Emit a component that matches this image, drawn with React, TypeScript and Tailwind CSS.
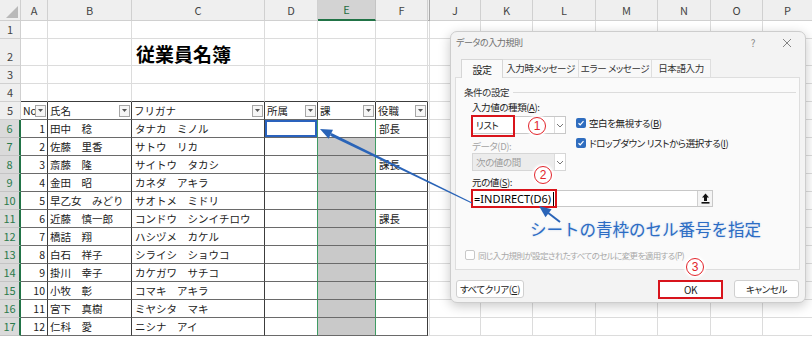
import React from "react";

const LETTERS = ["", "A", "B", "C", "D", "E", "F", "", "J", "K", "L", "M", "N", "O", "P"];
const PEOPLE: [string, string, string, string][] = [
  ["1", "田中　稔", "タナカ　ミノル", "部長"],
  ["2", "佐藤　里香", "サトウ　リカ", ""],
  ["3", "斎藤　隆", "サイトウ　タカシ", "課長"],
  ["4", "金田　昭", "カネダ　アキラ", ""],
  ["5", "早乙女　みどり", "サオトメ　ミドリ", ""],
  ["6", "近藤　慎一郎", "コンドウ　シンイチロウ", "課長"],
  ["7", "橋詰　翔", "ハシヅメ　カケル", ""],
  ["8", "白石　祥子", "シライシ　ショウコ", ""],
  ["9", "掛川　幸子", "カケガワ　サチコ", ""],
  ["10", "小牧　彰", "コマキ　アキラ", ""],
  ["11", "宮下　真樹", "ミヤシタ　マキ", ""],
  ["12", "仁科　愛", "ニシナ　アイ", ""],
];
const HEAD5 = ["No", "氏名", "フリガナ", "所属", "課", "役職"];

function FilterBtn() {
  return (
    <span className="shrink-0 w-[11px] h-[12px] mr-[1px] border border-[#a6a6a6] bg-[#f6f6f6] flex items-center justify-center">
      <svg width="5" height="3" viewBox="0 0 5 3">
        <path d="M0 0H5L2.5 3Z" fill="#555" />
      </svg>
    </span>
  );
}

function cellNode(r: number, c: number) {
  const key = `${r}-${c}`;
  if (r === 0) {
    if (c === 0)
      return (
        <div key={key} className="bg-[#efefef] border-r border-b border-[#cfcfcf] flex items-end justify-end pr-[2px] pb-[2px]">
          <svg width="12" height="12" viewBox="0 0 12 12">
            <polygon points="12,0 12,12 0,12" fill="#b9b9b9" />
          </svg>
        </div>
      );
    if (c === 5)
      return (
        <div key={key} className="bg-[#d3d3d3] text-[#1e6c41] border-r border-r-[#c4c4c4] border-b-2 border-b-[#217346] flex items-center justify-center text-[11px]">
          E
        </div>
      );
    if (c === 7)
      return <div key={key} className="bg-[#efefef] border-r border-b border-[#a9a9a9]" />;
    return (
      <div key={key} className="bg-[#efefef] text-[#444] border-r border-b border-[#d0d0d0] flex items-center justify-center text-[11px]">
        {LETTERS[c]}
      </div>
    );
  }
  if (c === 0) {
    if (r >= 6)
      return (
        <div key={key} className="bg-[#dadada] text-[#2a7a4c] border-b border-b-[#c4c4c4] border-r-2 border-r-[#217346] flex items-end justify-center pb-[1px] text-[11px]">
          {r}
        </div>
      );
    return (
      <div key={key} className="bg-[#efefef] text-[#444] border-r border-b border-[#d0d0d0] flex items-end justify-center pb-[1px] text-[11px]">
        {r}
      </div>
    );
  }
  const inTable = r >= 5 && c >= 1 && c <= 6;
  let bR = "border-r-[#dcdcdc]";
  let bB = "border-b-[#dcdcdc]";
  let bg = "bg-white";
  if (inTable) {
    bR = (c === 4 || c === 5) && r >= 6 ? "border-r-[#3f9b63]" : "border-r-[#3c3c3c]";
    bB = "border-b-[#6a6a6a]";
    if (c === 5 && r >= 7) bg = "bg-[#c9c9c9]";
  } else if (r === 4 && c >= 1 && c <= 6) {
    bB = "border-b-[#3c3c3c]";
  }
  const base = "border-r border-b overflow-hidden whitespace-nowrap text-[10.5px] text-[#222] flex";
  let extra = "";
  let content: React.ReactNode = null;
  if (r === 2 && c === 3) {
    extra = "items-end pb-[2px] pl-[4px] overflow-visible";
    content = <span className="text-[19px] font-bold leading-none text-black">従業員名簿</span>;
  } else if (r === 5 && c >= 1 && c <= 6) {
    extra = "items-center";
    content = (
      <>
        <span className="flex-1 min-w-0 overflow-hidden pl-[2px]">{HEAD5[c - 1]}</span>
        <FilterBtn />
      </>
    );
  } else if (r >= 6 && c >= 1 && c <= 6) {
    const p = PEOPLE[r - 6];
    if (c === 1) {
      extra = "items-center justify-end pr-[2px]";
      content = p[0];
    } else if (c === 2) {
      extra = "items-center pl-[2px]";
      content = p[1];
    } else if (c === 3) {
      extra = "items-center pl-[3px]";
      content = p[2];
    } else if (c === 6) {
      extra = "items-center pl-[3px]";
      content = p[3];
    }
    if (c === 4 && r === 6) extra = "shadow-[inset_0_0_0_2px_#2a62bd]";
  }
  return (
    <div key={key} className={[base, bR, bB, bg, extra].join(" ")}>
      {content}
    </div>
  );
}

function Check() {
  return (
    <span className="shrink-0 w-[10px] h-[10px] rounded-[2px] bg-[#2f6dbf] flex items-center justify-center">
      <svg width="8" height="8" viewBox="0 0 8 8">
        <path d="M1.5 4.2 L3.2 5.8 L6.5 2.2" stroke="white" strokeWidth="1.2" fill="none" />
      </svg>
    </span>
  );
}

function Chevron() {
  return (
    <svg width="8" height="5" viewBox="0 0 8 5">
      <path d="M1 1 L4 4 L7 1" stroke="#777" strokeWidth="1" fill="none" />
    </svg>
  );
}

export default function App() {
  const rows = Array.from({ length: 18 }, (_, i) => i);
  const cols = Array.from({ length: 15 }, (_, i) => i);
  return (
    <div className="relative w-[812px] h-[337px] overflow-hidden bg-white [font-family:'Noto_Sans_CJK_JP',sans-serif]">
      <div className="grid grid-cols-[21px_27px_84px_133px_53px_58px_52px_2px_51px_52px_63px_62px_53px_52px_50px] grid-rows-[21px_18px_27px_18px_18px_18px_18px_18px_18px_18px_18px_18px_18px_18px_18px_18px_18px_18px] w-[813px]">
        {rows.map((r) => cols.map((c) => cellNode(r, c)))}
      </div>

      {/* Dialog */}
      <div className="absolute left-[450px] top-[31px] w-[356px] h-[272px] bg-[#f3f3f3] border border-[#cdcdcd] rounded-[7px] shadow-[0_3px_12px_rgba(0,0,0,0.22)] flex flex-col [font-feature-settings:'palt'] tracking-[-0.4px] whitespace-nowrap text-[#222]">
        <div className="h-[27px] flex items-start pt-[4px] pl-[5px]">
          <span className="text-[9px] leading-[14px] text-[#707070]">データの入力規則</span>
          <div className="ml-auto flex gap-[8px] pr-[5px]">
            <span className="w-[26px] text-center text-[10px] leading-[14px] text-[#888]">?</span>
            <span className="w-[26px] h-[14px] flex items-center justify-center">
              <svg width="10" height="10" viewBox="0 0 10 10">
                <path d="M1 1 L9 9 M9 1 L1 9" stroke="#777" strokeWidth="0.9" />
              </svg>
            </span>
          </div>
        </div>
        <div className="flex items-start h-[18px] ml-[10px]">
          <div className="relative z-10 w-[42px] h-[19px] bg-[#fafafa] border border-b-0 border-[#d6d6d6] flex items-center justify-center text-[10px]">
            設定
          </div>
          <div className="w-[76px] h-[18px] bg-[#f8f8f8] border-t border-r border-[#dedede] flex items-center justify-center text-[9.5px] text-[#333]">
            入力時メッセージ
          </div>
          <div className="w-[73px] h-[18px] bg-[#f8f8f8] border-t border-r border-[#dedede] flex items-center justify-center text-[9.5px] text-[#333]">
            エラー メッセージ
          </div>
          <div className="w-[59px] h-[18px] bg-[#f8f8f8] border-t border-r border-[#dedede] flex items-center justify-center text-[9.5px] text-[#333]">
            日本語入力
          </div>
        </div>
        <div className="ml-[4px] mr-[5px] h-[193px] bg-[#fafafa] border border-[#dedede] flex flex-col">
          <div className="mt-[7px] h-[14px] ml-[8px] mr-[3px] flex items-center gap-[4px]">
            <span className="text-[9.5px] leading-[14px] text-[#333]">条件の設定</span>
            <span className="flex-1 h-px bg-[#dcdcdc]" />
          </div>
          <div className="ml-[16px] flex flex-col">
            <div className="mt-[1px] h-[14px] text-[9.5px] leading-[14px]">
              入力値の種類(<span className="underline">A</span>):
            </div>
            <div className="mt-[2px] flex">
              <div className="w-[94px] flex flex-col">
                <div className="h-[18px] bg-white border border-[#c8c8c8] flex">
                  <span className="flex-1 pl-[3px] text-[9.5px] leading-[16px]">リスト</span>
                  <span className="w-[11px] border-l border-[#dcdcdc] flex items-center justify-center">
                    <Chevron />
                  </span>
                </div>
                <div className="mt-[5px] h-[14px] text-[9.5px] leading-[14px] text-[#a4a4a4]">データ(D):</div>
                <div className="h-[18px] bg-[#ececec] border border-[#d6d6d6] flex">
                  <span className="flex-1 pl-[3px] text-[9.5px] leading-[16px] text-[#9c9c9c]">次の値の間</span>
                  <span className="w-[11px] bg-white border-l border-[#dcdcdc] flex items-center justify-center">
                    <Chevron />
                  </span>
                </div>
              </div>
              <div className="ml-[10px] flex flex-col">
                <div className="h-[14px] flex items-center gap-[3px] text-[9.5px]">
                  <Check />
                  <span>空白を無視する(<span className="underline">B</span>)</span>
                </div>
                <div className="mt-[6px] h-[14px] flex items-center gap-[3px] text-[9.5px]">
                  <Check />
                  <span>ドロップダウン リストから選択する(<span className="underline">I</span>)</span>
                </div>
              </div>
            </div>
            <div className="mt-[4px] h-[14px] text-[9.5px] leading-[14px]">
              元の値(<span className="underline">S</span>):
            </div>
            <div className="mt-[1px] h-[17px] w-[241px] bg-white border border-[#c8c8c8] flex">
              <span className="flex-1 pl-[1px] text-[11px] tracking-normal leading-[15px] text-black [font-family:'Noto_Sans',sans-serif]">=INDIRECT(D6)</span>
              <span className="w-[15px] bg-[#f4f4f4] border-l border-[#d0d0d0] flex items-center justify-center">
                <svg width="9" height="11" viewBox="0 0 9 11">
                  <path d="M4.5 0.5 L1 4.5 H3 V8 H6 V4.5 H8 Z" fill="#111" />
                  <rect x="0.5" y="9" width="8" height="1.6" fill="#111" />
                </svg>
              </span>
            </div>
            <div className="mt-[12px] h-[20px] ml-[58px] text-[16.5px] tracking-normal leading-[20px] text-[#2b6cc4] [font-feature-settings:normal] [text-shadow:0_0_2px_rgba(120,160,220,0.45)]">
              シートの青枠のセル番号を指定
            </div>
          </div>
          <div className="ml-[9px] mt-[9px] h-[14px] flex items-center gap-[3px] text-[8.5px] tracking-[-0.6px] text-[#a8a8a8]">
            <span className="shrink-0 w-[10px] h-[10px] border border-[#c8c8c8] bg-white rounded-[2px]" />
            <span>同じ入力規則が設定されたすべてのセルに変更を適用する(P)</span>
          </div>
        </div>
        <div className="mt-[10px] flex pl-[5px] pr-[6px]">
          <div className="w-[68px] h-[18px] bg-white border border-[#d0d0d0] rounded-[3px] flex items-center justify-center text-[9.5px]">
            すべてクリア(<span className="underline">C</span>)
          </div>
          <div className="ml-auto w-[65px] h-[19px] bg-white border-2 border-[#d8141c] flex items-center justify-center text-[10px]">
            OK
          </div>
          <div className="ml-[11px] w-[65px] h-[18px] bg-white border border-[#d0d0d0] rounded-[3px] flex items-center justify-center text-[9.5px]">
            キャンセル
          </div>
        </div>
      </div>

      {/* Annotations */}
      <div className="absolute left-[471px] top-[115px] w-[44px] h-[22px] border-2 border-[#d9141b]" />
      <div className="absolute left-[471px] top-[189px] w-[86px] h-[19px] border-2 border-[#d9141b]" />
      <div className="absolute left-[553px] top-[192px] w-px h-[14px] bg-black" />

      <div className="absolute left-[528px] top-[117px] w-[18px] h-[18px] rounded-full border border-[#e2242b] bg-white flex items-center justify-center text-[12px] leading-none text-[#e2242b] shadow-[0_0_2px_2px_rgba(255,255,255,0.9)] [font-family:'Liberation_Sans',sans-serif]">
        1
      </div>
      <div className="absolute left-[534px] top-[166px] w-[18px] h-[18px] rounded-full border border-[#e2242b] bg-white flex items-center justify-center text-[12px] leading-none text-[#e2242b] shadow-[0_0_2px_2px_rgba(255,255,255,0.9)] [font-family:'Liberation_Sans',sans-serif]">
        2
      </div>
      <div className="absolute left-[686px] top-[258px] w-[18px] h-[18px] rounded-full border border-[#e2242b] bg-white flex items-center justify-center text-[12px] leading-none text-[#e2242b] shadow-[0_0_2px_2px_rgba(255,255,255,0.9)] [font-family:'Liberation_Sans',sans-serif]">
        3
      </div>

      <svg className="absolute left-0 top-0 pointer-events-none" width="812" height="337" viewBox="0 0 812 337">
        <polygon points="472.2,202.55 471.8,203.45 330.14,135.65 331.46,132.95" fill="#2a64b8" />
        <polygon points="320,129 333,129.8 328.6,138.8" fill="#2a64b8" />
        <line x1="560" y1="222" x2="547" y2="212" stroke="#2a64b8" strokeWidth="2" />
        <polygon points="539,206 551.6,209.3 545.5,217.3" fill="#2a64b8" />
      </svg>
    </div>
  );
}
